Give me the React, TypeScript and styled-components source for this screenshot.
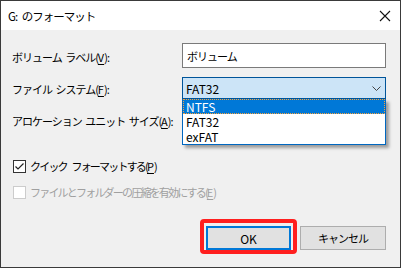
import React from 'react'
import styled, { createGlobalStyle, css } from 'styled-components'

const GlobalStyle = createGlobalStyle`
    html, body {
        margin: 0;
        padding: 0;
        background: #f0f0f0;
    }
    body {
        font-family: "Noto Sans CJK JP", "Noto Sans", sans-serif;
        font-size: 12px;
        color: #000;
    }
`

// Windows の Yu Gothic UI に近い詰まった和文
const jpText = css`
    font-size: 11px;
    letter-spacing: -1px;
    word-spacing: 3px;
    white-space: nowrap;
`

const Window = styled.div`
    box-sizing: border-box;
    width: 401px;
    height: 268px;
    border: 1px solid #3a3a3a;
    display: flex;
    flex-direction: column;
    background: #f0f0f0;
`

const TitleBar = styled.div`
    height: 29px;
    flex: none;
    background: #fff;
    display: flex;
    align-items: center;
    justify-content: space-between;
    padding: 0 8px 0 7px;
`

const Title = styled.span`
    ${jpText}
    font-size: 11.5px;
`

const CloseIcon = styled.svg`
    width: 12px;
    height: 12px;
    margin-right: 1px;
`

const Body = styled.div`
    flex: 1;
    display: flex;
    flex-direction: column;
    padding: 13px 14px 0 11px;
`

const FieldRow = styled.div<{ $top?: number; $h?: number }>`
    display: grid;
    grid-template-columns: 170px 1fr;
    align-items: center;
    height: ${({ $h }) => $h ?? 22}px;
    margin-top: ${({ $top }) => $top ?? 0}px;
`

const Label = styled.span`
    ${jpText}
    word-spacing: 2px;
    padding-top: 2px;
`

const Key = styled.span`
    text-decoration: underline;
    text-underline-offset: 2px;
    letter-spacing: 0;
`

const TextBox = styled.div`
    ${jpText}
    box-sizing: border-box;
    height: 25px;
    border: 1px solid #7a7a7a;
    background: #fff;
    display: flex;
    align-items: center;
    padding-left: 4px;
`

const SelectWrap = styled.div`
    position: relative;
    height: 22px;
`

const SelectBox = styled.div`
    box-sizing: border-box;
    height: 22px;
    border: 1px solid #005499;
    background: #cce4f7;
    display: flex;
    align-items: center;
    justify-content: space-between;
    padding: 0 4px 0 3px;
`

const Chevron = styled.svg`
    width: 9px;
    height: 5px;
`

const DropList = styled.div`
    position: absolute;
    left: 0;
    right: 0;
    top: 22px;
    box-sizing: border-box;
    border: 1px solid #0067c0;
    border-top: none;
    background: #fff;
    box-shadow: 3px 3px 3px rgba(0, 0, 0, 0.35);
    z-index: 2;
`

const Option = styled.div<{ $selected?: boolean }>`
    box-sizing: border-box;
    height: 15px;
    line-height: 13px;
    padding-left: 2px;
    background: ${({ $selected }) => ($selected ? '#0078d7' : '#fff')};
    color: ${({ $selected }) => ($selected ? '#fff' : '#000')};
    border: 1px ${({ $selected }) => ($selected ? 'dotted #f7a23b' : 'solid transparent')};
`

const CheckRow = styled.label<{ $disabled?: boolean; $top: number }>`
    display: flex;
    align-items: center;
    gap: 4px;
    height: 20px;
    margin-left: 1px;
    margin-top: ${({ $top }) => $top}px;
    color: ${({ $disabled }) => ($disabled ? '#a0a0a0' : '#000')};
`

const CheckText = styled.span`
    ${jpText}
    letter-spacing: -1.8px;
    word-spacing: 4px;
`

const Box = styled.span<{ $disabled?: boolean }>`
    box-sizing: border-box;
    width: 13px;
    height: 13px;
    border: 1px solid ${({ $disabled }) => ($disabled ? '#cccccc' : '#333')};
    background: #fff;
    display: flex;
    align-items: center;
    justify-content: center;
`

const Footer = styled.div`
    margin-top: auto;
    display: flex;
    justify-content: flex-end;
    align-items: flex-end;
    gap: 3px;
    padding: 0 0 13px;
`

const Highlight = styled.div`
    border: 4px solid #ff1f1f;
    border-radius: 4px;
    padding: 3px 2px 0 2px;
    display: flex;
`

const Button = styled.button<{ $default?: boolean }>`
    box-sizing: border-box;
    width: ${({ $default }) => ($default ? 85 : 86)}px;
    height: 24px;
    margin: 0 0 ${({ $default }) => ($default ? 0 : 4)}px;
    font-family: inherit;
    font-size: ${({ $default }) => ($default ? 12 : 11)}px;
    letter-spacing: ${({ $default }) => ($default ? 0 : -1)}px;
    color: #000;
    background: #e1e1e1;
    border: ${({ $default }) => ($default ? '2px solid #0078d7' : '1px solid #adadad')};
    padding: 0;
`

export default function App() {
    return (
        <>
            <GlobalStyle />
            <Window>
                <TitleBar>
                    <Title>G: のフォーマット</Title>
                    <CloseIcon viewBox="0 0 12 12">
                        <path d="M1 1 L11 11 M11 1 L1 11" stroke="#111" strokeWidth="1.1" fill="none" />
                    </CloseIcon>
                </TitleBar>
                <Body>
                    <FieldRow $h={25}>
                        <Label>ボリューム ラベル(<Key>V</Key>):</Label>
                        <TextBox>ボリューム</TextBox>
                    </FieldRow>
                    <FieldRow $top={9}>
                        <Label>ファイル システム(<Key>F</Key>):</Label>
                        <SelectWrap>
                            <SelectBox>
                                <span>FAT32</span>
                                <Chevron viewBox="0 0 9 5">
                                    <path d="M0.5 0.5 L4.5 4.5 L8.5 0.5" stroke="#444" strokeWidth="1" fill="none" />
                                </Chevron>
                            </SelectBox>
                            <DropList>
                                <Option $selected>NTFS</Option>
                                <Option>FAT32</Option>
                                <Option>exFAT</Option>
                            </DropList>
                        </SelectWrap>
                    </FieldRow>
                    <FieldRow $top={10}>
                        <Label>アロケーション ユニット サイズ(<Key>A</Key>):</Label>
                        <span />
                    </FieldRow>
                    <CheckRow $top={25}>
                        <Box>
                            <svg width="11" height="11" viewBox="0 0 11 11">
                                <path d="M1.5 5.5 L4 8 L9.5 2.5" stroke="#222" strokeWidth="1.2" fill="none" />
                            </svg>
                        </Box>
                        <CheckText>クイック フォーマットする(<Key>P</Key>)</CheckText>
                    </CheckRow>
                    <CheckRow $disabled $top={6}>
                        <Box $disabled />
                        <CheckText>ファイルとフォルダーの圧縮を有効にする(<Key>E</Key>)</CheckText>
                    </CheckRow>
                    <Footer>
                        <Highlight>
                            <Button $default>OK</Button>
                        </Highlight>
                        <Button>キャンセル</Button>
                    </Footer>
                </Body>
            </Window>
        </>
    )
}
